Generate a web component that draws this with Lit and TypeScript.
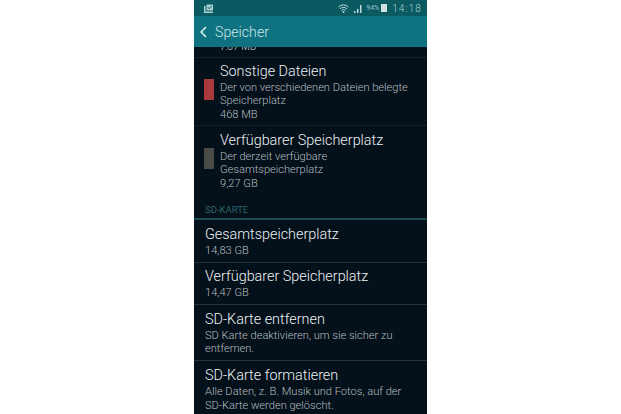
import { LitElement, html, css } from "lit";
import { customElement } from "lit/decorators.js";

@customElement("app-root")
export class AppRoot extends LitElement {
  static styles = css`
    :host { display: block; width: 621px; height: 414px; background: #fff; overflow: hidden; font-family: Roboto, "Liberation Sans", sans-serif; }
    .phone { width: 233px; height: 414px; margin-left: 194px; background: #04101a; display: flex; flex-direction: column; overflow: hidden; color: #e6ecee; }
    .status { height: 16px; flex: none; background: #0b5a62; display: flex; align-items: center; padding: 0 5px 0 10px; box-sizing: border-box; color: #a9d0d2; }
    .status .right { margin-left: auto; display: flex; align-items: center; }
    .pct { font-size: 7px; margin: 0 2px 0 3px; color: #9cc8ca; }
    .time { font-size: 10px; font-weight: 300; letter-spacing: 1.1px; margin-left: 5px; color: #a9cfd1; }
    .bar { height: 31px; flex: none; background: #0e7280; display: flex; align-items: center; padding-left: 6px; gap: 8px; font-size: 14.2px; font-weight: 300; color: #cfe8ea; }
    .list { flex: 1; min-height: 0; overflow: hidden; display: flex; flex-direction: column; }
    .clip { height: 10px; flex: none; overflow: hidden; border-bottom: 1px solid #12222b; padding-left: 26px; display: flex; align-items: flex-start; }
    .clip span { font-size: 10px; line-height: 6px; color: #9aa6ab; height: 6px; overflow: hidden; display: block; margin-top: -3px; }
    .row { display: flex; flex: none; align-items: center; border-bottom: 1px solid #22343b; box-sizing: border-box; }
    .row.usage { padding-left: 10px; gap: 6px; height: 68px; border-bottom-color: #12222b; }
    .row.usage.last { border-bottom: 0; height: 69px; }
    .swatch { width: 10px; height: 21px; flex: none; margin-bottom: 4px; }
    .text { min-width: 0; }
    .row.plain { padding-left: 11px; }
    .title { font-size: 14.4px; font-weight: 300; line-height: 17px; padding-top: 1px; color: #eef2f3; white-space: nowrap; }
    .sub { font-size: 11.1px; font-weight: 300; line-height: 13.5px; color: #b4bdc0; margin-top: 1px; white-space: nowrap; }
    .sec { flex: none; font-size: 9.5px; color: #2c6468; padding: 10px 0 0 11px; box-sizing: border-box; border-bottom: 2px solid #174a50; line-height: 10px; height: 25px; }
    .h42 { height: 42px; }
    .h43 { height: 43px; }
    .h56 { height: 56px; }
  `;

  render() {
    return html`<div class="phone">
      <div class="status">
        <svg width="9" height="9" viewBox="0 0 9 9"><path d="M0 2h1.5v5.5H9V9H0z" fill="#a9d0d2"/><path d="M2.5 0.5H9V6.5H2.5z" fill="#a9d0d2"/><path d="M3.8 3.2l1.4 1.5 2.4-2.6" fill="none" stroke="#0b5a62" stroke-width="1"/></svg>
        <div class="right">
          <svg width="11" height="9" viewBox="0 0 11 9"><path d="M0.5 3a7 7 0 0 1 10 0M2 4.8a5 5 0 0 1 7 0M3.6 6.4a2.6 2.6 0 0 1 3.8 0" fill="none" stroke="#b9dcdc" stroke-width="1"/><circle cx="5.5" cy="8" r="1" fill="#b9dcdc"/></svg>
          <svg style="margin-left:5px" width="9" height="9" viewBox="0 0 9 9"><path d="M0 7h1.5v2H0zM3 5h1.5v4H3zM6 1h1.5v8H6z" fill="#b9dcdc"/></svg>
          <span class="pct">94%</span>
          <svg width="6" height="8" viewBox="0 0 6 8"><rect width="6" height="8" fill="#cfe3e4"/></svg>
          <span class="time">14:18</span>
        </div>
      </div>
      <div class="bar">
        <svg width="7" height="12" viewBox="0 0 7 12"><path d="M6 1L1.2 6 6 11" fill="none" stroke="#dff1f2" stroke-width="1.6"/></svg>
        <span>Speicher</span>
      </div>
      <div class="list">
        <div class="clip"><span>7,87 MB</span></div>
        <div class="row usage">
          <div class="swatch" style="background:#a83a3c"></div>
          <div class="text">
            <div class="title">Sonstige Dateien</div>
            <div class="sub">Der von verschiedenen Dateien belegte<br>Speicherplatz<br>468 MB</div>
          </div>
        </div>
        <div class="row usage last">
          <div class="swatch" style="background:#4a4a48"></div>
          <div class="text">
            <div class="title">Verfügbarer Speicherplatz</div>
            <div class="sub">Der derzeit verfügbare<br>Gesamtspeicherplatz<br>9,27 GB</div>
          </div>
        </div>
        <div class="sec">SD-KARTE</div>
        <div class="row plain h43"><div class="text"><div class="title">Gesamtspeicherplatz</div><div class="sub">14,83 GB</div></div></div>
        <div class="row plain h42"><div class="text"><div class="title">Verfügbarer Speicherplatz</div><div class="sub">14,47 GB</div></div></div>
        <div class="row plain h56"><div class="text"><div class="title">SD-Karte entfernen</div><div class="sub">SD Karte deaktivieren, um sie sicher zu<br>entfernen.</div></div></div>
        <div class="row plain h56" style="border-bottom:0"><div class="text"><div class="title">SD-Karte formatieren</div><div class="sub">Alle Daten, z. B. Musik und Fotos, auf der<br>SD-Karte werden gelöscht.</div></div></div>
      </div>
    </div>`;
  }
}
